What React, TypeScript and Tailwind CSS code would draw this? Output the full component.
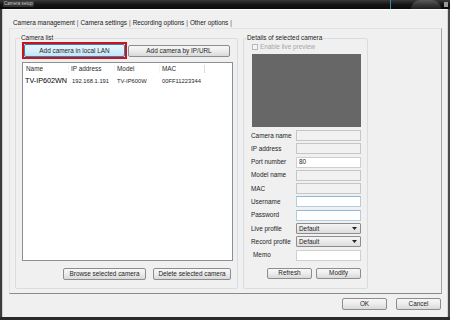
import { ReactNode } from 'react'

const btn =
  'flex items-center justify-center border border-[#8d8d8d] rounded-[2px] bg-linear-to-b from-[#f7f7f7] via-[#ececec] to-[#d9d9d9] text-[#1e1e1e]'

const Button = ({ label, className }: { label: string; className: string }) => (
  <div className={`${btn} ${className}`}>{label}</div>
)

type Row = { label: string; kind: 'disabled' | 'white' | 'focus' | 'select'; value?: string }

const rows: Row[] = [
  { label: 'Camera name', kind: 'disabled' },
  { label: 'IP address', kind: 'disabled' },
  { label: 'Port number', kind: 'white', value: '80' },
  { label: 'Model name', kind: 'disabled' },
  { label: 'MAC', kind: 'disabled' },
  { label: 'Username', kind: 'focus' },
  { label: 'Password', kind: 'focus' },
  { label: 'Live profile', kind: 'select', value: 'Default' },
  { label: 'Record profile', kind: 'select', value: 'Default' },
  { label: 'Memo', kind: 'white' },
]

const Field = ({ row }: { row: Row }): ReactNode => {
  if (row.kind === 'select')
    return (
      <div className="flex items-center justify-between w-[65px] h-[11px] border border-[#8d8d8d] rounded-[1px] bg-linear-to-b from-[#f4f4f4] to-[#dedede] pl-[2px] pr-[3px]">
        <span>{row.value}</span>
        <svg width="5" height="3" viewBox="0 0 5 3">
          <path d="M0 0h5L2.5 3z" fill="#222" />
        </svg>
      </div>
    )
  const look =
    row.kind === 'disabled'
      ? 'bg-[#f1f1f1] border-[#c6c6c6]'
      : row.kind === 'focus'
        ? 'bg-white border-[#b4cbe0] border-t-[#8fb6dc]'
        : 'bg-white border-[#cfcfcf]'
  return (
    <div className={`flex items-center w-[65px] h-[11px] border pl-[2px] ${look}`}>
      {row.value}
    </div>
  )
}

export default function App() {
  return (
    <div className="w-[450px] h-[320px] flex flex-col bg-[#1c1c1c] overflow-hidden font-['Liberation_Sans',Arial,sans-serif] text-[6.4px] leading-[8px] text-[#1e1e1e]">
      {/* TITLE BAR */}
      <div className="h-[9px] flex items-stretch bg-linear-to-b from-[#3a3a3a] via-[#151515] to-[#0b0b0b]">
        <div className="ml-[3px] mt-[1px] h-[6px] px-[1px] flex items-center bg-[#4a4a4a]/60 text-[4.6px] leading-[6px] text-[#c9c9c9]">
          Camera setup
        </div>
        <div className="flex-1" />
        <div className="w-[1px] bg-[#2f8f96]" />
        <div className="w-[20px]" />
        <div className="w-[30px] rounded-t-full bg-linear-to-b from-[#6a6a6a] to-[#2a2a2a] opacity-70" />
        <div className="w-[3px]" />
        <div className="mt-[2px] w-[4px] h-[5px] bg-[#9a9a9a]" />
        <div className="w-[2px]" />
      </div>

      <div className="flex-1 flex">
        <div className="w-[2px] bg-[#3b3b3b]" />
        <div className="w-[1px] bg-[#cfcfcf]" />

        {/* CLIENT */}
        <div className="flex-1 flex flex-col bg-[#f0f0f0] border-t border-[#fbfbfb]">
          {/* TABS */}
          <div className="h-[18px] pt-[9px] pl-[10px] flex gap-[2px] text-[#1a1a1a]">
            <span>Camera management</span>
            <span className="text-[#555]">|</span>
            <span>Camera settings</span>
            <span className="text-[#555]">|</span>
            <span>Recording options</span>
            <span className="text-[#555]">|</span>
            <span>Other options</span>
            <span className="text-[#555]">|</span>
          </div>

          {/* TAB PANEL */}
          <div className="ml-[6px] mr-[5px] h-[266px] flex border border-[#e2e2e2] border-r-[#a3a3a3] border-b-[#8a8a8a]">
            {/* CAMERA LIST */}
            <fieldset className="ml-[5px] mt-[5px] w-[223px] h-[255px] border border-[#d6dde3] rounded-[2px] pl-[6px] pr-[4px] flex flex-col">
              <legend className="ml-[-2px] px-[1px]">Camera list</legend>
              <div className="flex items-center gap-[1px]">
                <div className="w-[105px] h-[17px] border-2 border-[#c8141d] flex">
                  <div className="flex-1 flex items-center justify-center border border-[#3c7fb1] rounded-[2px] bg-linear-to-b from-[#eaf6fd] via-[#d9f0fc] to-[#bee6fd]">
                    Add camera in local LAN
                  </div>
                </div>
                <Button label="Add camera by IP/URL" className="w-[102px] h-[12px]" />
              </div>

              <div className="mt-[3px] h-[199px] bg-white border border-[#8b9097] flex flex-col">
                <div className="h-[12px] flex items-center text-[#2a2a2a]">
                  <div className="w-[46px] pl-[3px] border-r border-[#f4f4f4]">Name</div>
                  <div className="w-[46px] pl-[2px] border-r border-[#f4f4f4]">IP address</div>
                  <div className="w-[45px] pl-[2px] border-r border-[#f4f4f4]">Model</div>
                  <div className="w-[45px] pl-[2px] border-r border-[#d9dde2]">MAC</div>
                </div>
                <div className="h-[11px] flex items-center whitespace-nowrap">
                  <div className="w-[46px] pl-[2px] text-[7.2px] text-black">TV-IP602WN</div>
                  <div className="w-[46px] pl-[3px] text-[5.8px]">192.168.1.191</div>
                  <div className="w-[45px] pl-[2px] text-[5.8px]">TV-IP600W</div>
                  <div className="w-[45px] pl-[2px] text-[5.8px]">00FF11223344</div>
                </div>
              </div>

              <div className="mt-[7px] mr-[2px] flex justify-end gap-[7px]">
                <Button label="Browse selected camera" className="w-[83px] h-[12px]" />
                <Button label="Delete selected camera" className="w-[78px] h-[12px]" />
              </div>
            </fieldset>

            {/* DETAILS */}
            <fieldset className="ml-[5px] mt-[5px] w-[125px] h-[255px] border border-[#d6dde3] rounded-[2px] pl-[8px] pr-[6px] flex flex-col">
              <legend className="ml-[-6px] px-[1px]">Details of selected camera</legend>
              <div className="mt-[1px] h-[8px] flex items-center gap-[2px] text-[#a6a6a6]">
                <div className="w-[6px] h-[6px] border border-[#b9b9b9] bg-[#f5f5f5]" />
                <span>Enable live preview</span>
              </div>
              <div className="mt-[3px] w-[109px] h-[73px] bg-[#676767]" />

              <div className="mt-[3px] flex flex-col gap-[2.3px]">
                {rows.map((row) => (
                  <div key={row.label} className="flex items-center h-[11px]">
                    <div className={`w-[44px] ${row.label === 'Memo' ? 'pl-[1px]' : '-ml-[1px] mr-[1px]'}`}>
                      {row.label}
                    </div>
                    <Field row={row} />
                  </div>
                ))}
              </div>

              <div className="mt-[7px] flex justify-end gap-[4px]">
                <Button label="Refresh" className="w-[45px] h-[11px]" />
                <Button label="Modify" className="w-[45px] h-[11px]" />
              </div>
            </fieldset>
          </div>

          {/* DIALOG BUTTONS */}
          <div className="mt-[4px] pr-[6px] flex justify-end gap-[9px]">
            <Button label="OK" className="w-[45px] h-[12px]" />
            <Button label="Cancel" className="w-[45px] h-[12px]" />
          </div>
        </div>

        <div className="w-[1px] bg-[#d5d5d5]" />
        <div className="w-[2px] bg-[#4a4a4a]" />
      </div>
      <div className="h-[3px] bg-[#2a2a2a]" />
    </div>
  )
}
